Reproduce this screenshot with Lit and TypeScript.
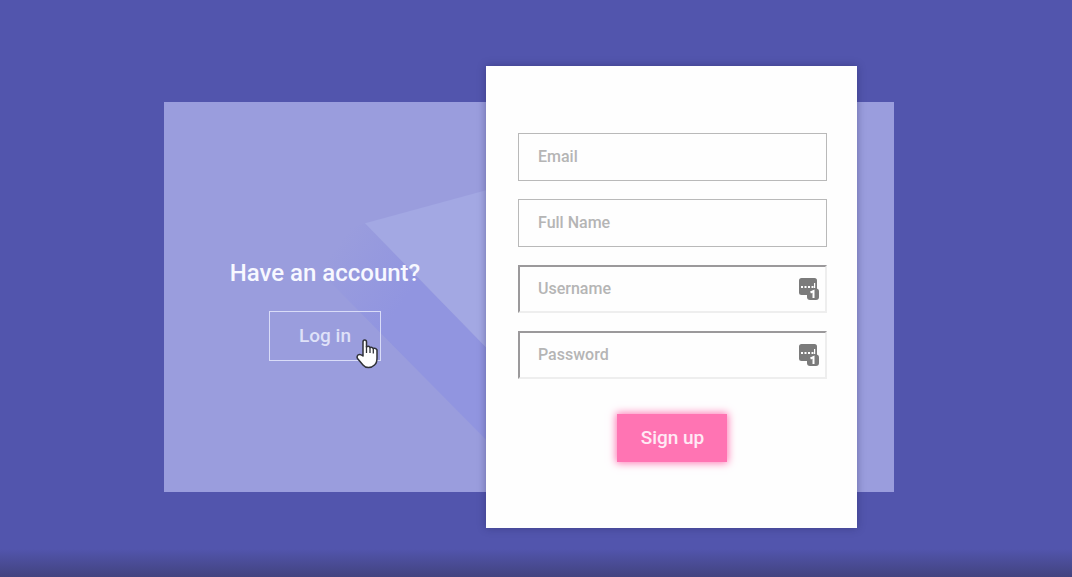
import { LitElement, html, css } from "lit";
import { customElement } from "lit/decorators.js";

@customElement("vault-badge")
class VaultBadge extends LitElement {
  static styles = css`
    :host { display: block; width: 20px; height: 23px; }
    svg { display: block; }
    .body { fill: #7b7b7b; }
    .mark { fill: #fff; }
    .digit { fill: none; stroke: #fff; stroke-width: 2; }
  `;
  render() {
    return html`<svg width="20" height="23" viewBox="0 0 20 23" aria-hidden="true">
      <rect class="body" x="0" y="0" width="18" height="17" rx="2.500" />
      <path class="mark" d="M2 8h2v2H2zM5.500 8h2v2h-2zM9 8h2v2H9zM12.500 8h2v2h-2zM15 5h1.200v5H15z" />
      <rect class="body" x="8" y="10.500" width="12" height="11.500" rx="3" />
      <path class="digit" d="M11.500 14.500L14.500 13V20" />
    </svg>`;
  }
}

@customElement("app-root")
class AppRoot extends LitElement {
  static styles = css`
    :host {
      display: block;
      font-family: Roboto, "Liberation Sans", sans-serif;
    }
    * { box-sizing: border-box; }
    .page {
      min-height: 100vh;
      display: flex;
      align-items: center;
      justify-content: center;
      padding: 52px 14px 36px 0;
      background: linear-gradient(to top, #42437f, #5255ad 28px);
    }
    .panel {
      position: relative;
      width: 69%;
      display: grid;
      grid-template-columns: 322fr 371fr 37fr;
      background: #9a9ddd;
    }
    .facets {
      position: absolute;
      inset: 0;
      width: 100%;
      height: 100%;
    }
    .login {
      position: relative;
      display: flex;
      flex-direction: column;
      align-items: center;
      justify-content: center;
      gap: 24px;
      padding-top: 26px;
    }
    h2 {
      margin: 0;
      font-size: 24px;
      line-height: 28px;
      font-weight: 500;
      color: #f7f8ff;
      white-space: nowrap;
    }
    .ghost {
      width: 112px;
      height: 50px;
      padding: 0;
      border: 1px solid #d9dcf8;
      background: transparent;
      color: #dfe1f8;
      font: 500 19px/24px Roboto, sans-serif;
      cursor: pointer;
    }
    .action { position: relative; display: flex; }
    .pointer { position: absolute; left: 87px; top: 27px; }
    .card {
      position: relative;
      margin: -36px 0;
      padding: 67px 30px 66px 32px;
      background: #fefefe;
      box-shadow: 0 0 8px rgba(30, 30, 80, 0.4);
      display: flex;
      flex-direction: column;
      align-items: center;
      gap: 18px;
    }
    .field { position: relative; display: block; width: 100%; }
    .caption {
      position: absolute;
      left: 20px;
      top: 14px;
      color: #b5b5b5;
      font: 500 16px/20px Roboto, sans-serif;
      cursor: text;
      pointer-events: none;
      visibility: hidden;
    }
    input:placeholder-shown + .caption { visibility: visible; }
    input {
      display: block;
      width: 100%;
      height: 48px;
      padding: 0 48px 0 20px;
      border: 1px solid #b9b9b9;
      border-radius: 0;
      background: #fefefe;
      color: #666;
      font: 500 16px/20px Roboto, sans-serif;
      outline: none;
    }
    input.sunken {
      padding-left: 19px;
      border: 2px solid;
      border-color: #9b999b #eee #eee #9b999b;
    }
    .badge { position: absolute; right: 8px; top: 13px; }
    .submit {
      width: 110px;
      height: 48px;
      margin-top: 17px;
      padding: 0;
      border: 0;
      background: #ff74b3;
      box-shadow: 0 0 8px 1px #ff74b3;
      color: #ffeaf5;
      font: 500 19px/24px Roboto, sans-serif;
      cursor: pointer;
    }
  `;

  private fields = [
    { name: "email", label: "Email", type: "email", vault: false },
    { name: "fullname", label: "Full Name", type: "text", vault: false },
    { name: "username", label: "Username", type: "text", vault: true },
    { name: "password", label: "Password", type: "password", vault: true },
  ];

  render() {
    return html`<main class="page">
      <div class="panel">
        <svg class="facets" viewBox="0 0 730 389" preserveAspectRatio="none" aria-hidden="true">
          <defs>
            <linearGradient id="fade" gradientUnits="userSpaceOnUse" x1="165" y1="155" x2="235" y2="205">
              <stop offset="0" stop-color="#9195e0" stop-opacity="0" />
              <stop offset="1" stop-color="#9195e0" />
            </linearGradient>
          </defs>
          <path fill="url(#fade)" d="M201 121L340 263V355L130 143z" />
          <path fill="#a3a8e3" d="M201 121L322 88L340 84V263z" />
        </svg>
        <section class="login">
          <h2>Have an account?</h2>
          <div class="action">
            <button class="ghost" type="button">Log in</button>
            <svg class="pointer" width="23" height="31" viewBox="0 0 23 31" aria-hidden="true">
              <path
                fill="#fff" stroke="#303238" stroke-width="1.5" stroke-linejoin="round"
                d="M7 18V4Q7 2 8.700 2Q10.500 2 10.500 4V9Q12.500 7.500 14 9.500Q16 8.500 17.200 10.500Q19.500 9.500 21 12V20Q21 25 18.500 27Q16 29.500 12.500 29.500Q9 29.500 7 27L1.500 20.500Q0.500 18.500 2 17Q4 15.500 7 18z" />
              <path fill="none" stroke="#303238" stroke-width="1.3" d="M10.500 8V15M14 10V15M17.300 11V15.500" />
            </svg>
          </div>
        </section>
        <form class="card" @submit=${(e: Event) => e.preventDefault()}>
          ${this.fields.map(
            (f) => html`<div class="field">
              <input
                id=${f.name} name=${f.name} type=${f.type}
                class=${f.vault ? "sunken" : ""}
                placeholder=" " />
              <label class="caption" for=${f.name}>${f.label}</label>
              ${f.vault ? html`<vault-badge class="badge"></vault-badge>` : ""}
            </div>`
          )}
          <button class="submit" type="submit">Sign up</button>
        </form>
      </div>
    </main>`;
  }
}
